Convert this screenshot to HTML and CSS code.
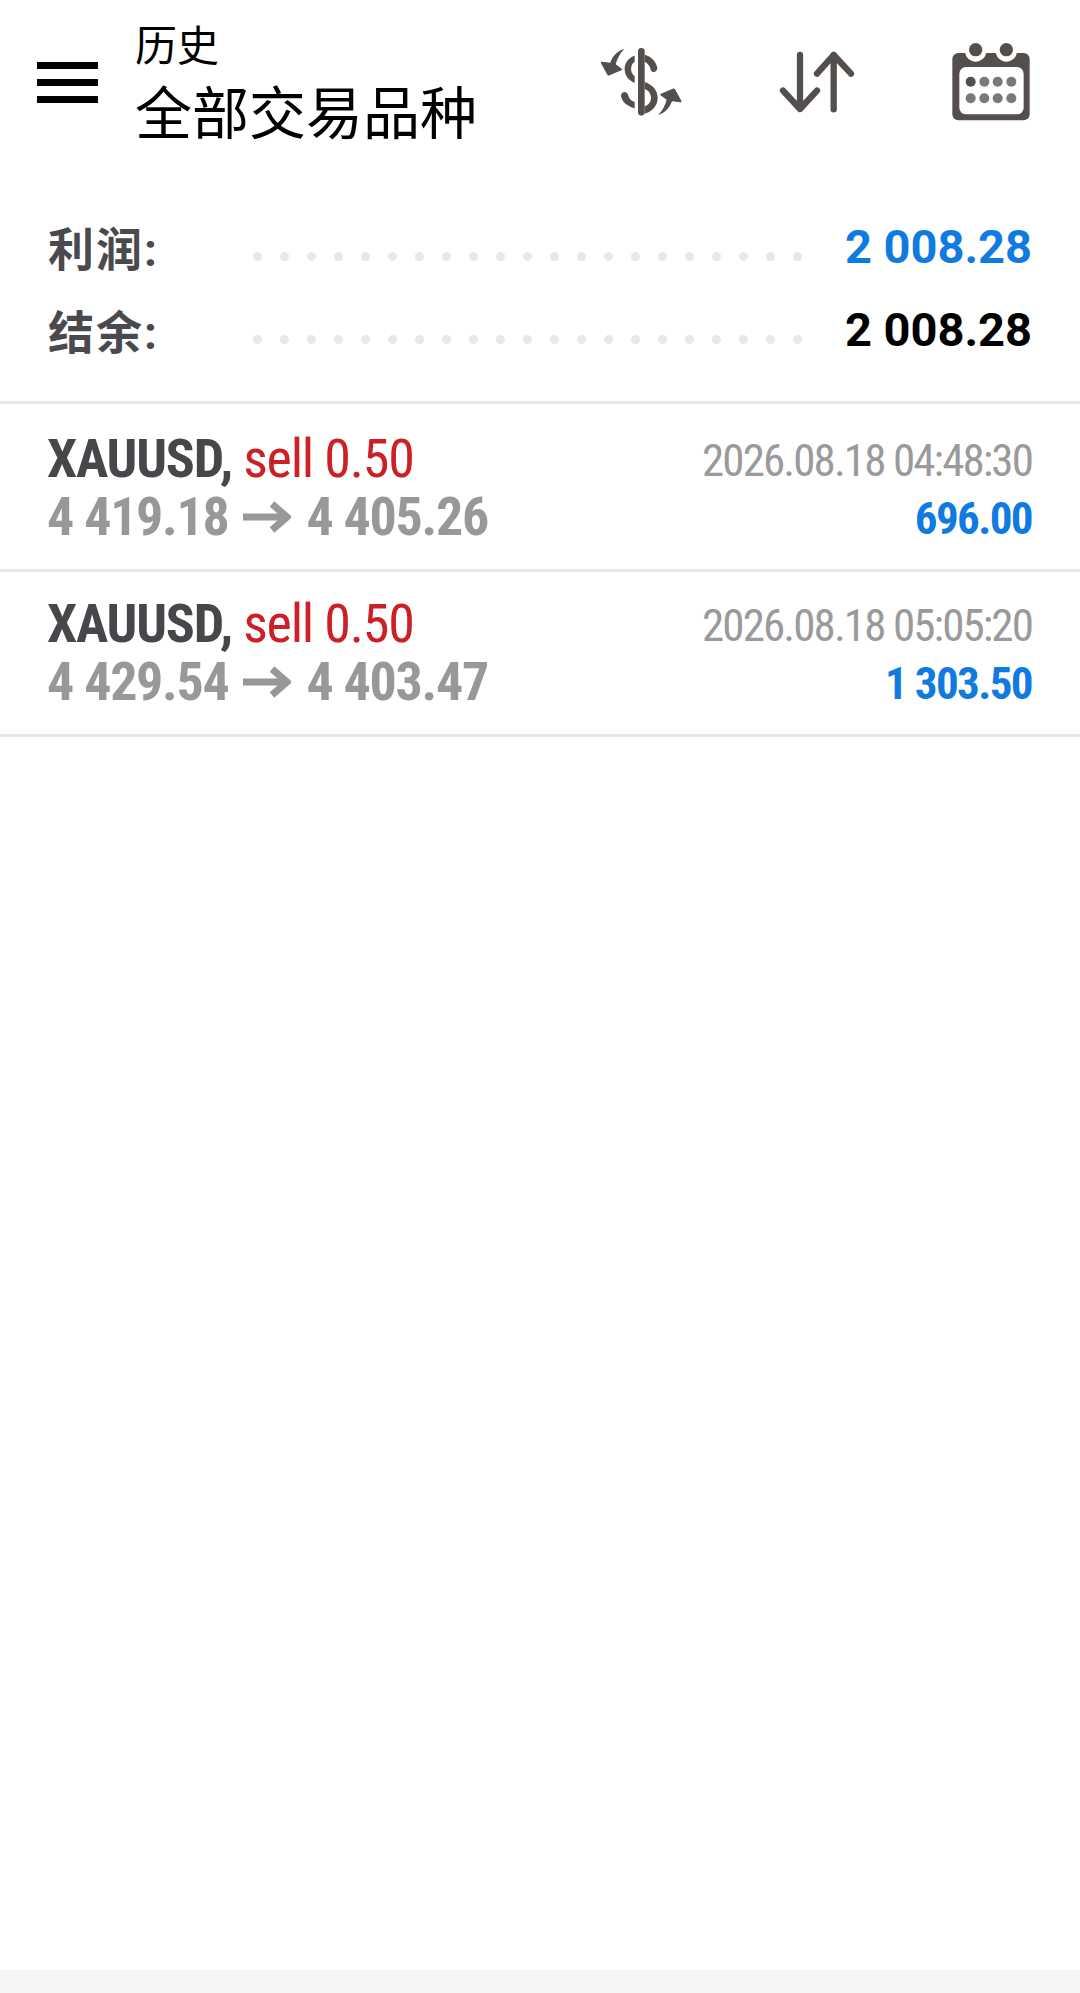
FILE: index.html
```html
<!DOCTYPE html>
<html lang="zh-CN">
<head>
<meta charset="utf-8">
<title>历史</title>
<link rel="stylesheet" href="styles.css">
</head>
<body>
<div class="page">
  <header class="topbar">
    <div class="burger"><i></i><i></i><i></i></div>
    <div class="titles">
      <div class="title-sm">历史</div>
      <div class="title-lg">全部交易品种</div>
    </div>
    <div class="actions">
      <svg class="icon" viewBox="97 37 300 300">
        <g fill="#544e4c">
          <rect x="238" y="85" width="20" height="203" rx="10"/>
          <path d="M228 108C205 115 197 135 198 150C199 170 212 182 228 190V170C218 162 216 150 218 142C220 132 224 128 228 126Z"/>
          <path d="M258 105C277 110 292 125 296 144C297 157 281 162 276 150C273 137 267 130 258 126Z"/>
          <path d="M258 187C280 195 297 210 297 235C297 262 275 278 258 282V260C270 255 277 247 277 235C277 220 268 212 258 208Z"/>
          <path d="M228 266C206 260 190 247 187 230C186 216 203 212 208 225C211 237 218 243 228 247Z"/>
          <path d="M197 88C176 93 162 110 155 129L130 126C127 126 126 128 127 131L146 165C148 168 150 168 153 167L188 152C191 150 191 149 189 147L171 134C175 118 184 100 197 88Z"/>
          <path d="M298 286C319 281 333 264 340 245L365 248C368 248 369 246 368 243L349 209C347 206 345 206 342 207L307 222C304 224 304 225 306 227L324 240C320 256 311 274 298 286Z"/>
        </g>
      </svg>
      <svg class="icon" viewBox="619 37 300 300">
        <g fill="none" stroke="#544e4c" stroke-width="19" stroke-linecap="round" stroke-linejoin="round">
          <path d="M721 106V268M670 213L721 268L772 213"/>
          <path d="M822 269V106M772 162L822 106L874 162"/>
        </g>
      </svg>
      <svg class="icon" viewBox="1142 33 300 300">
        <rect x="1176" y="96" width="232" height="202" rx="18" fill="#544e4c"/>
        <rect x="1197" y="138" width="193" height="142" rx="20" fill="#fff"/>
        <circle cx="1246" cy="90" r="32" fill="#fff"/>
        <circle cx="1338" cy="90" r="32" fill="#fff"/>
        <circle cx="1246" cy="86" r="20" fill="#544e4c"/>
        <circle cx="1338" cy="86" r="20" fill="#544e4c"/>
        <circle cx="1231" cy="182" r="15" fill="#544e4c"/>
        <g fill="#7d7876">
          <circle cx="1272" cy="182" r="15"/><circle cx="1312" cy="182" r="15"/><circle cx="1353" cy="182" r="15"/>
          <circle cx="1231" cy="232" r="15"/><circle cx="1272" cy="232" r="15"/><circle cx="1312" cy="232" r="15"/><circle cx="1353" cy="232" r="15"/>
        </g>
      </svg>
    </div>
  </header>

  <section class="summary">
    <div class="sum-row">
      <span class="sum-label">利润:</span>
      <span class="dots"><i></i><i></i><i></i><i></i><i></i><i></i><i></i><i></i><i></i><i></i><i></i><i></i><i></i><i></i><i></i><i></i><i></i><i></i><i></i><i></i><i></i></span>
      <span class="sum-value blue">2 008.28</span>
    </div>
    <div class="sum-row">
      <span class="sum-label">结余:</span>
      <span class="dots"><i></i><i></i><i></i><i></i><i></i><i></i><i></i><i></i><i></i><i></i><i></i><i></i><i></i><i></i><i></i><i></i><i></i><i></i><i></i><i></i><i></i></span>
      <span class="sum-value">2 008.28</span>
    </div>
  </section>

  <main class="deals">
    <article class="deal">
      <div class="deal-left">
        <div class="deal-head"><b class="sym">XAUUSD,</b> <span class="side">sell 0.50</span></div>
        <div class="deal-prices"><span>4 419.18</span>
          <svg class="arrow" viewBox="0 0 48 32"><path d="M0 16H44M29 3L44 16L29 29" fill="none" stroke="#96989a" stroke-width="7"/></svg>
          <span>4 405.26</span></div>
      </div>
      <div class="deal-right">
        <div class="deal-time">2026.08.18 04:48:30</div>
        <div class="deal-profit">696.00</div>
      </div>
    </article>
    <article class="deal">
      <div class="deal-left">
        <div class="deal-head"><b class="sym">XAUUSD,</b> <span class="side">sell 0.50</span></div>
        <div class="deal-prices"><span>4 429.54</span>
          <svg class="arrow" viewBox="0 0 48 32"><path d="M0 16H44M29 3L44 16L29 29" fill="none" stroke="#96989a" stroke-width="7"/></svg>
          <span>4 403.47</span></div>
      </div>
      <div class="deal-right">
        <div class="deal-time">2026.08.18 05:05:20</div>
        <div class="deal-profit">1 303.50</div>
      </div>
    </article>
  </main>

  <footer class="navstrip"></footer>
</div>
</body>
</html>
```
FILE: styles.css
```css
* { box-sizing: border-box; }
html, body { margin: 0; padding: 0; background: #fff; }
body { font-family: Roboto, "Noto Sans CJK SC", sans-serif; }
.page { width: 1080px; height: 1993px; display: flex; flex-direction: column; }

.topbar { height: 164px; display: flex; align-items: center; padding: 0 39px 0 37px; }
.burger { width: 61px; display: flex; flex-direction: column; gap: 10px; }
.burger i { display: block; height: 7px; background: #000; }
.titles { margin-left: 37px; padding-top: 10px; display: flex; flex-direction: column; color: #000; font-family: "Noto Sans CJK SC", sans-serif; }
.title-sm { font-size: 42px; line-height: 44px; }
.title-lg { font-size: 57px; line-height: 88px; }
.actions { margin-left: auto; display: flex; gap: 75px; }
.icon { width: 100px; height: 100px; display: block; }

.summary { height: 240px; padding: 40px 48px 0; border-bottom: 3px solid #e6e6e6; display: flex; flex-direction: column; }
.sum-row { height: 83px; display: flex; align-items: center; }
.sum-label { width: 205px; font-family: Roboto, "Noto Sans CJK SC", sans-serif; font-weight: 700; font-size: 46px; letter-spacing: 2px; color: #4a4a4e; }
.dots { display: flex; gap: 18px; margin-top: 21px; }
.dots i { width: 9px; height: 9px; border-radius: 50%; background: #e8e8e8; }
.sum-value { margin-left: auto; padding-top: 2px; font-weight: 700; font-size: 47px; color: #000; }
.blue { color: #0f7be0; }

.deals { flex: 1; padding-top: 3px; }
.deal { height: 165px; padding: 23px 48px 0 47px; border-bottom: 3px solid #e6e6e6; display: flex; justify-content: space-between; }
.deal-left, .deal-right { font-family: "Roboto Condensed", Roboto, sans-serif; font-stretch: 75%; }
.deal-head { font-size: 54px; line-height: 58px; letter-spacing: -1.2px; white-space: nowrap; }
.sym { font-weight: 700; color: #47474b; }
.side { color: #cd2026; }
.deal-prices { font-size: 54px; line-height: 58px; font-weight: 700; letter-spacing: -1.3px; color: #96989a; display: flex; align-items: center; gap: 15px; white-space: nowrap; }
.arrow { width: 48px; height: 32px; }
.deal-right { text-align: right; padding-top: 2px; }
.deal-time { font-size: 45px; line-height: 58px; letter-spacing: -1.9px; color: #9a9a9a; white-space: nowrap; }
.deal-profit { font-size: 45px; line-height: 58px; font-weight: 700; letter-spacing: -1.6px; color: #0f7be0; white-space: nowrap; }

.navstrip { height: 23px; background: #f5f5f5; }
```
